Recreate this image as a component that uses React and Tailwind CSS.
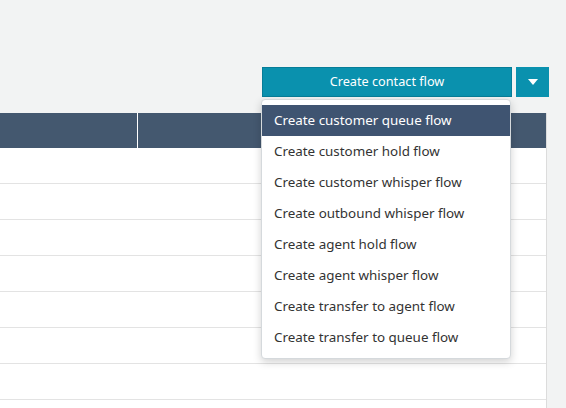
import React from 'react';

const items = [
  'Create customer queue flow',
  'Create customer hold flow',
  'Create customer whisper flow',
  'Create outbound whisper flow',
  'Create agent hold flow',
  'Create agent whisper flow',
  'Create transfer to agent flow',
  'Create transfer to queue flow',
];

export default function App() {
  return (
    <div className="relative h-[408px] w-[566px] overflow-hidden bg-[#f2f3f3]" style={{ fontFamily: '"Noto Sans", "Open Sans", sans-serif' }}>
      {/* toolbar */}
      <div className="flex justify-end gap-[4px] pt-[67px] pr-[17px]">
        <div className="relative">
          <button className="flex h-[30px] w-[250px] items-center justify-center border border-[#077d98] bg-[#0a91ae] text-[12.7px] text-white">
            Create contact flow
          </button>
          {/* dropdown menu */}
          <div className="absolute left-[-1px] top-[32px] z-10 w-[250px] rounded-[4px] border border-[#d5d9dc] bg-white py-[5px] shadow-[0_3px_8px_rgba(0,0,0,0.18)]">
            {items.map((label, i) => (
              <div
                key={label}
                className={`flex h-[31px] items-center pl-[12px] text-[13.4px] ${i === 0 ? 'bg-[#3f5471] text-white' : 'text-[#333]'}`}
              >
                {label}
              </div>
            ))}
          </div>
        </div>
        <button className="flex h-[30px] w-[33px] items-center justify-center bg-[#0a91ae]">
          <svg width="10" height="6" viewBox="0 0 10 6">
            <path d="M0 0 L10 0 L5 6 Z" fill="white" />
          </svg>
        </button>
      </div>

      {/* table */}
      <div className="mt-[16px] mr-[19px] border-r border-[#dcdcdc] bg-white">
        <div className="flex h-[35px] bg-[#44586f]">
          <div className="w-[138px] border-r border-white" />
          <div className="flex-1" />
        </div>
        {[0, 1, 2, 3, 4, 5, 6, 7].map((r) => (
          <div key={r} className="h-[36px] border-b border-[#e3e3e3]" />
        ))}
      </div>
    </div>
  );
}
